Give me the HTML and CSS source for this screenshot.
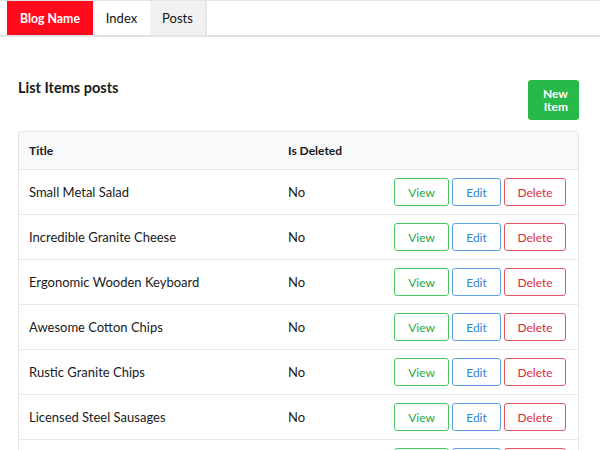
FILE: index.html
```html
<!DOCTYPE html>
<html>
<head>
<meta charset="utf-8">
<link rel="stylesheet" href="styles.css">
</head>
<body>
<nav class="navbar">
  <a class="brand">Blog Name</a>
  <a class="nav-link">Index</a>
  <a class="nav-link active">Posts</a>
</nav>
<main class="content">
  <div class="page-head">
    <h1 class="page-title">List Items posts</h1>
    <button class="btn-new"><span>New</span><span>Item</span></button>
  </div>
  <div class="card">
    <div class="row head">
      <div class="cell">Title</div>
      <div class="cell">Is Deleted</div>
      <div class="cell"></div>
    </div>
    <div class="row">
      <div class="cell">Small Metal Salad</div>
      <div class="cell">No</div>
      <div class="cell actions"><button class="btn view">View</button><button class="btn edit">Edit</button><button class="btn del">Delete</button></div>
    </div>
    <div class="row">
      <div class="cell">Incredible Granite Cheese</div>
      <div class="cell">No</div>
      <div class="cell actions"><button class="btn view">View</button><button class="btn edit">Edit</button><button class="btn del">Delete</button></div>
    </div>
    <div class="row">
      <div class="cell">Ergonomic Wooden Keyboard</div>
      <div class="cell">No</div>
      <div class="cell actions"><button class="btn view">View</button><button class="btn edit">Edit</button><button class="btn del">Delete</button></div>
    </div>
    <div class="row">
      <div class="cell">Awesome Cotton Chips</div>
      <div class="cell">No</div>
      <div class="cell actions"><button class="btn view">View</button><button class="btn edit">Edit</button><button class="btn del">Delete</button></div>
    </div>
    <div class="row">
      <div class="cell">Rustic Granite Chips</div>
      <div class="cell">No</div>
      <div class="cell actions"><button class="btn view">View</button><button class="btn edit">Edit</button><button class="btn del">Delete</button></div>
    </div>
    <div class="row">
      <div class="cell">Licensed Steel Sausages</div>
      <div class="cell">No</div>
      <div class="cell actions"><button class="btn view">View</button><button class="btn edit">Edit</button><button class="btn del">Delete</button></div>
    </div>
    <div class="row last">
      <div class="cell"></div>
      <div class="cell"></div>
      <div class="cell actions"><span class="btn view"></span><span class="btn edit"></span><span class="btn del"></span></div>
    </div>
  </div>
</main>
</body>
</html>
```

FILE: styles.css
```css
* { box-sizing: border-box; }
html, body { margin: 0; padding: 0; background: #fff; }
body {
  font-family: Lato, "Open Sans", sans-serif;
  color: #1a1a1a;
  font-size: 13px;
  overflow: hidden;
  height: 450px;
}
.navbar {
  display: flex;
  height: 37px;
  border-top: 1px solid #e3e3e3;
  border-bottom: 2px solid #e3e3e3;
  padding-left: 7px;
}
.navbar a {
  display: flex;
  align-items: center;
  justify-content: center;
  font-size: 13px;
  color: #111;
  height: 34px;
}
.brand {
  background: #ff0a1c;
  color: #fff !important;
  font-weight: 700;
  font-size: 12.3px !important;
  width: 86px;
}
.nav-link { width: 57px; }
.nav-link.active {
  background: #f1f1f1;
  border-right: 2px solid #e5e5e5;
}
.content { padding: 0 21px 0 18px; }
.page-head {
  display: flex;
  justify-content: space-between;
  align-items: flex-start;
  padding-top: 43px;
  height: 94px;
}
.page-title {
  margin: 0;
  font-size: 14.5px;
  font-weight: 700;
  line-height: 14px;
  padding-top: 1px;
}
.btn-new {
  width: 51px;
  height: 40px;
  background: #28b94b;
  border: none;
  border-radius: 3px;
  color: #fff;
  font-family: Lato, sans-serif;
  font-weight: 700;
  font-size: 12px;
  line-height: 13px;
  padding: 0 11px 0 0;
  display: flex;
  flex-direction: column;
  align-items: flex-end;
  justify-content: center;
}
.card {
  border: 1px solid #e5e5e5;
  border-radius: 4px;
}
.row {
  display: grid;
  grid-template-columns: 259px 1fr auto;
  align-items: center;
  height: 45px;
  border-top: 1px solid #e9e9e9;
}
.row.head {
  background: #f8f9fa;
  border-top: none;
  height: 38px;
  font-weight: 700;
  font-size: 12px;
  border-bottom: 1px solid #e3e3e3;
  border-radius: 4px 4px 0 0;
}
.row.head + .row { border-top: none; height: 44px; }
.cell { padding-left: 10px; }
.actions {
  display: flex;
  gap: 3px;
  padding-right: 12px;
}
.btn {
  display: block;
  height: 28px;
  background: #fff;
  border: 1px solid;
  border-radius: 3px;
  font-family: Lato, sans-serif;
  font-size: 12px;
  padding: 0;
}
.view { width: 55px; color: #22a83f; border-color: #49c862; }
.edit { width: 49px; color: #2f86d2; border-color: #5ca2e0; }
.del { width: 62px; color: #dc2a3a; border-color: #e05561; }
```
